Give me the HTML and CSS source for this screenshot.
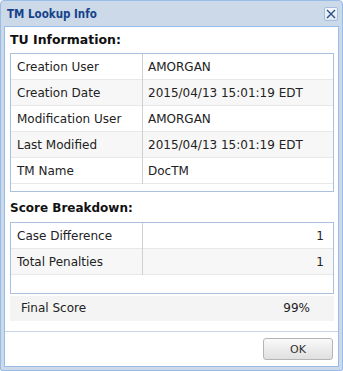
FILE: index.html
```html
<!DOCTYPE html>
<html lang="en">
<head>
  <meta charset="UTF-8">
  <link rel="stylesheet" href="styles.css">
</head>
<body>
  <div class="window">
    <div class="header">
      <span class="title">TM Lookup Info</span>
      <span class="close">
        <svg width="10" height="10" viewBox="0 0 10 10">
          <path d="M1 1 L9 9 M9 1 L1 9" stroke="#2b4f86" stroke-width="1.4" fill="none"/>
        </svg>
      </span>
    </div>
    <div class="inner">
      <div class="content">
        <h2 class="section first">TU Information:</h2>
        <div class="box info">
          <div class="row"><span class="label">Creation User</span><span class="value">AMORGAN</span></div>
          <div class="row alt"><span class="label">Creation Date</span><span class="value">2015/04/13 15:01:19 EDT</span></div>
          <div class="row"><span class="label">Modification User</span><span class="value">AMORGAN</span></div>
          <div class="row alt"><span class="label">Last Modified</span><span class="value">2015/04/13 15:01:19 EDT</span></div>
          <div class="row"><span class="label">TM Name</span><span class="value">DocTM</span></div>
        </div>
        <h2 class="section">Score Breakdown:</h2>
        <div class="box score">
          <div class="row"><span class="label">Case Difference</span><span class="value num">1</span></div>
          <div class="row alt"><span class="label">Total Penalties</span><span class="value num">1</span></div>
        </div>
        <div class="final">
          <span>Final Score</span>
          <span>99%</span>
        </div>
      </div>
      <div class="footer">
        <button class="btn">OK</button>
      </div>
    </div>
  </div>
</body>
</html>
```

FILE: styles.css
```css
html, body {
  margin: 0;
  width: 343px;
  height: 371px;
  font-family: "DejaVu Sans", Verdana, sans-serif;
  font-size: 12px;
  color: #222;
}

.window {
  box-sizing: border-box;
  width: 343px;
  height: 371px;
  display: flex;
  flex-direction: column;
  background: #ccd9e8;
  border: 1px solid #99bbe8;
  border-radius: 4px 4px 2px 2px;
  padding: 0 3px 3px 3px;
}

.header {
  height: 25px;
  display: flex;
  align-items: center;
  justify-content: space-between;
  padding: 0 1px 0 3px;
}

.title {
  font-family: "DejaVu Sans Condensed", "DejaVu Sans", sans-serif;
  font-stretch: condensed;
  font-weight: bold;
  font-size: 11.5px;
  color: #15428b;
}

.close {
  box-sizing: border-box;
  width: 14px;
  height: 14px;
  display: flex;
  align-items: center;
  justify-content: center;
  border: 1px solid #a6bedd;
  border-radius: 2px;
  background: linear-gradient(#f4f8fd, #dfe8f4);
}

.inner {
  flex: 1;
  display: flex;
  flex-direction: column;
  background: #fff;
  border: 1px solid #99bbe8;
}

.content {
  flex: 1;
  padding: 0 4px 0 5px;
}

.section {
  margin: 0;
  font-size: 12px;
  font-weight: bold;
  line-height: 16px;
  color: #111;
  padding: 8px 0 6px 0;
}

.section.first {
  font-size: 12.5px;
  padding: 5px 0 5px 0;
}

.box {
  border: 1px solid #a9c0de;
}

.box.info {
  padding-bottom: 7px;
}

.box.score {
  padding-bottom: 18px;
}

.row {
  display: grid;
  grid-template-columns: 132px 1fr;
  height: 26px;
  box-sizing: border-box;
  border-bottom: 1px solid #e8e8e8;
  line-height: 26px;
}

.row.alt {
  background: #f7f7f7;
}

.label {
  padding-left: 6px;
  border-right: 1px solid #d0d0d0;
}

.value {
  padding-left: 5px;
}

.value.num {
  text-align: right;
  padding-right: 9px;
}

.final {
  margin-top: 2px;
  height: 25px;
  line-height: 25px;
  display: flex;
  justify-content: space-between;
  background: #f4f4f4;
  padding: 0 24px 0 11px;
}

.footer {
  height: 34px;
  border-top: 1px solid #c5d4e6;
  display: flex;
  justify-content: flex-end;
  align-items: flex-start;
  padding-right: 5px;
}

.btn {
  margin-top: 6px;
  width: 70px;
  height: 22px;
  font-family: "DejaVu Sans", sans-serif;
  font-size: 11px;
  color: #333;
  border: 1px solid #b5b5b5;
  border-radius: 3px;
  background: linear-gradient(#fafafa, #ececec 50%, #e0e0e0);
  padding: 0;
}
```
